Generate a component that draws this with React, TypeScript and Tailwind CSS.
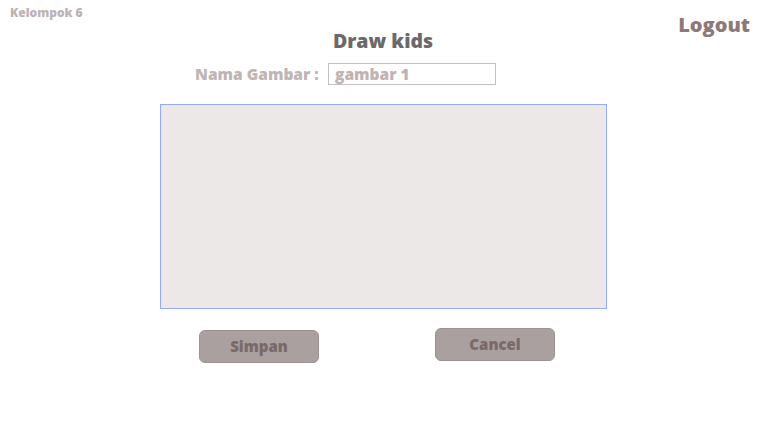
export default function App() {
  const font = { fontFamily: '"Open Sans", "Noto Sans", sans-serif' };
  return (
    <div className="w-[766px] h-[421px] bg-white overflow-hidden" style={font}>
      <div className="grid grid-cols-[1fr_auto_1fr] items-start">
        <div className="pl-[10px] pt-[5px] text-[12px] font-extrabold text-[#bdb2b2] leading-[16px]">Kelompok 6</div>
        <div className="pt-[29px] text-[19.5px] font-extrabold text-[#6b6969] leading-[24px]">Draw kids</div>
        <div className="flex justify-end pr-[16px] pt-[12px] text-[20px] font-extrabold text-[#8f7878] leading-[26px]">Logout</div>
      </div>
      <div className="flex items-center pl-[195px] mt-[10px]">
        <span className="w-[133px] whitespace-nowrap text-[15.5px] font-extrabold text-[#c0b5b5] leading-[20px]">Nama Gambar :</span>
        <div className="w-[168px] h-[22px] border border-[#c2c0c0] flex items-center pl-[6px] text-[15.5px] font-extrabold text-[#c2b3b3] leading-[20px]">gambar 1</div>
      </div>
      <div className="ml-[160px] mt-[19px] w-[447px] h-[205px] border border-[#98a8fa] bg-[#ece8e7]" />
      <div className="flex items-start pl-[199px] mt-[19px]">
        <button className="mt-[2px] w-[120px] h-[33px] rounded-[6px] border border-[#9d9292] bg-[#aaa0a0] text-[15px] font-extrabold text-[#7b6969]">Simpan</button>
        <button className="ml-[116px] w-[120px] h-[33px] rounded-[6px] border border-[#9d9292] bg-[#aaa0a0] text-[15px] font-extrabold text-[#7b6969]">Cancel</button>
      </div>
    </div>
  );
}
